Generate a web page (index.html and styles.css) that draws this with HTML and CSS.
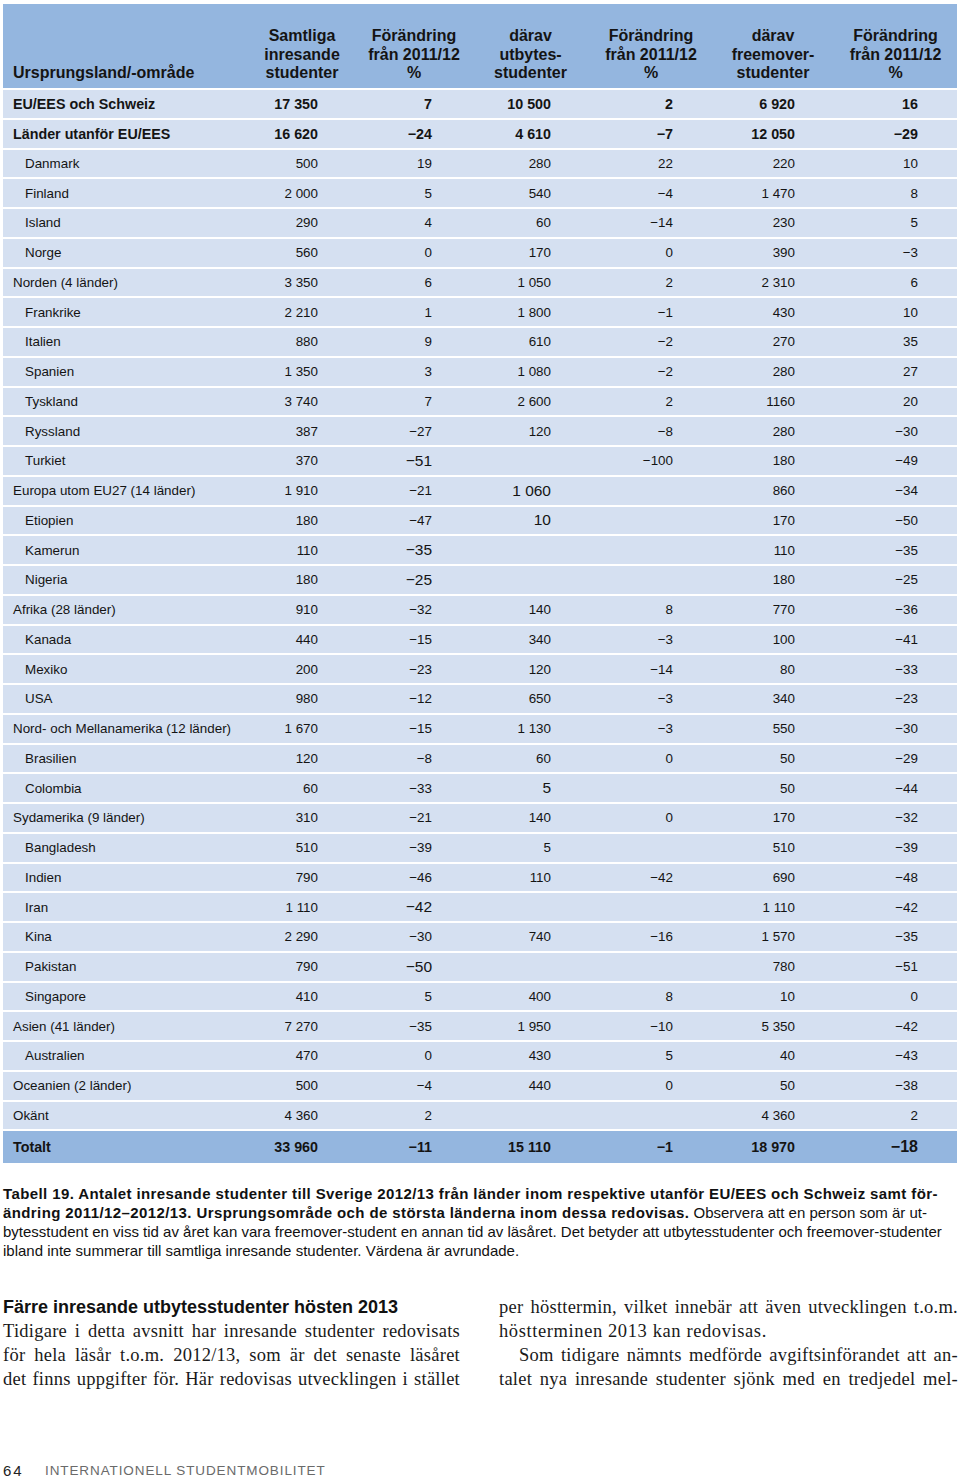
FILE: index.html
```html
<!DOCTYPE html>
<html lang="sv">
<head>
<meta charset="utf-8">
<title>Tabell 19</title>
<link rel="stylesheet" href="styles.css">
</head>
<body>
<div class="page">
  <div class="table">
    <div class="row head">
      <div class="hl">Ursprungsland/-område</div>
      <div class="hc">Samtliga<br>inresande<br>studenter</div>
      <div class="hc">Förändring<br>från 2011/12<br>%</div>
      <div class="hc">därav<br>utbytes-<br>studenter</div>
      <div class="hc">Förändring<br>från 2011/12<br>%</div>
      <div class="hc">därav<br>freemover-<br>studenter</div>
      <div class="hc">Förändring<br>från 2011/12<br>%</div>
    </div>
    <div class="row bold"><div class="l">EU/EES och Schweiz</div><div class="n">17 350</div><div class="n">7</div><div class="n">10 500</div><div class="n">2</div><div class="n">6 920</div><div class="n">16</div></div>
    <div class="row bold"><div class="l">Länder utanför EU/EES</div><div class="n">16 620</div><div class="n">−24</div><div class="n">4 610</div><div class="n">−7</div><div class="n">12 050</div><div class="n">−29</div></div>
    <div class="row"><div class="l in">Danmark</div><div class="n">500</div><div class="n">19</div><div class="n">280</div><div class="n">22</div><div class="n">220</div><div class="n">10</div></div>
    <div class="row"><div class="l in">Finland</div><div class="n">2 000</div><div class="n">5</div><div class="n">540</div><div class="n">−4</div><div class="n">1 470</div><div class="n">8</div></div>
    <div class="row"><div class="l in">Island</div><div class="n">290</div><div class="n">4</div><div class="n">60</div><div class="n">−14</div><div class="n">230</div><div class="n">5</div></div>
    <div class="row"><div class="l in">Norge</div><div class="n">560</div><div class="n">0</div><div class="n">170</div><div class="n">0</div><div class="n">390</div><div class="n">−3</div></div>
    <div class="row"><div class="l">Norden (4 länder)</div><div class="n">3 350</div><div class="n">6</div><div class="n">1 050</div><div class="n">2</div><div class="n">2 310</div><div class="n">6</div></div>
    <div class="row"><div class="l in">Frankrike</div><div class="n">2 210</div><div class="n">1</div><div class="n">1 800</div><div class="n">−1</div><div class="n">430</div><div class="n">10</div></div>
    <div class="row"><div class="l in">Italien</div><div class="n">880</div><div class="n">9</div><div class="n">610</div><div class="n">−2</div><div class="n">270</div><div class="n">35</div></div>
    <div class="row"><div class="l in">Spanien</div><div class="n">1 350</div><div class="n">3</div><div class="n">1 080</div><div class="n">−2</div><div class="n">280</div><div class="n">27</div></div>
    <div class="row"><div class="l in">Tyskland</div><div class="n">3 740</div><div class="n">7</div><div class="n">2 600</div><div class="n">2</div><div class="n">1160</div><div class="n">20</div></div>
    <div class="row"><div class="l in">Ryssland</div><div class="n">387</div><div class="n">−27</div><div class="n">120</div><div class="n">−8</div><div class="n">280</div><div class="n">−30</div></div>
    <div class="row"><div class="l in">Turkiet</div><div class="n">370</div><div class="n lg">−51</div><div class="n"></div><div class="n">−100</div><div class="n">180</div><div class="n">−49</div></div>
    <div class="row"><div class="l">Europa utom EU27 (14 länder)</div><div class="n">1 910</div><div class="n">−21</div><div class="n lg">1 060</div><div class="n"></div><div class="n">860</div><div class="n">−34</div></div>
    <div class="row"><div class="l in">Etiopien</div><div class="n">180</div><div class="n">−47</div><div class="n lg">10</div><div class="n"></div><div class="n">170</div><div class="n">−50</div></div>
    <div class="row"><div class="l in">Kamerun</div><div class="n">110</div><div class="n lg">−35</div><div class="n"></div><div class="n"></div><div class="n">110</div><div class="n">−35</div></div>
    <div class="row"><div class="l in">Nigeria</div><div class="n">180</div><div class="n lg">−25</div><div class="n"></div><div class="n"></div><div class="n">180</div><div class="n">−25</div></div>
    <div class="row"><div class="l">Afrika (28 länder)</div><div class="n">910</div><div class="n">−32</div><div class="n">140</div><div class="n">8</div><div class="n">770</div><div class="n">−36</div></div>
    <div class="row"><div class="l in">Kanada</div><div class="n">440</div><div class="n">−15</div><div class="n">340</div><div class="n">−3</div><div class="n">100</div><div class="n">−41</div></div>
    <div class="row"><div class="l in">Mexiko</div><div class="n">200</div><div class="n">−23</div><div class="n">120</div><div class="n">−14</div><div class="n">80</div><div class="n">−33</div></div>
    <div class="row"><div class="l in">USA</div><div class="n">980</div><div class="n">−12</div><div class="n">650</div><div class="n">−3</div><div class="n">340</div><div class="n">−23</div></div>
    <div class="row"><div class="l">Nord- och Mellanamerika (12 länder)</div><div class="n">1 670</div><div class="n">−15</div><div class="n">1 130</div><div class="n">−3</div><div class="n">550</div><div class="n">−30</div></div>
    <div class="row"><div class="l in">Brasilien</div><div class="n">120</div><div class="n">−8</div><div class="n">60</div><div class="n">0</div><div class="n">50</div><div class="n">−29</div></div>
    <div class="row"><div class="l in">Colombia</div><div class="n">60</div><div class="n">−33</div><div class="n lg">5</div><div class="n"></div><div class="n">50</div><div class="n">−44</div></div>
    <div class="row"><div class="l">Sydamerika (9 länder)</div><div class="n">310</div><div class="n">−21</div><div class="n">140</div><div class="n">0</div><div class="n">170</div><div class="n">−32</div></div>
    <div class="row"><div class="l in">Bangladesh</div><div class="n">510</div><div class="n">−39</div><div class="n">5</div><div class="n"></div><div class="n">510</div><div class="n">−39</div></div>
    <div class="row"><div class="l in">Indien</div><div class="n">790</div><div class="n">−46</div><div class="n">110</div><div class="n">−42</div><div class="n">690</div><div class="n">−48</div></div>
    <div class="row"><div class="l in">Iran</div><div class="n">1 110</div><div class="n lg">−42</div><div class="n"></div><div class="n"></div><div class="n">1 110</div><div class="n">−42</div></div>
    <div class="row"><div class="l in">Kina</div><div class="n">2 290</div><div class="n">−30</div><div class="n">740</div><div class="n">−16</div><div class="n">1 570</div><div class="n">−35</div></div>
    <div class="row"><div class="l in">Pakistan</div><div class="n">790</div><div class="n lg">−50</div><div class="n"></div><div class="n"></div><div class="n">780</div><div class="n">−51</div></div>
    <div class="row"><div class="l in">Singapore</div><div class="n">410</div><div class="n">5</div><div class="n">400</div><div class="n">8</div><div class="n">10</div><div class="n">0</div></div>
    <div class="row"><div class="l">Asien (41 länder)</div><div class="n">7 270</div><div class="n">−35</div><div class="n">1 950</div><div class="n">−10</div><div class="n">5 350</div><div class="n">−42</div></div>
    <div class="row"><div class="l in">Australien</div><div class="n">470</div><div class="n">0</div><div class="n">430</div><div class="n">5</div><div class="n">40</div><div class="n">−43</div></div>
    <div class="row"><div class="l">Oceanien (2 länder)</div><div class="n">500</div><div class="n">−4</div><div class="n">440</div><div class="n">0</div><div class="n">50</div><div class="n">−38</div></div>
    <div class="row"><div class="l">Okänt</div><div class="n">4 360</div><div class="n">2</div><div class="n"></div><div class="n"></div><div class="n">4 360</div><div class="n">2</div></div>
    <div class="row bold total"><div class="l">Totalt</div><div class="n">33 960</div><div class="n">−11</div><div class="n">15 110</div><div class="n">−1</div><div class="n">18 970</div><div class="n lg">−18</div></div>
  </div>

  <div class="caption">
    <div class="cl"><b>Tabell 19. Antalet inresande studenter till Sverige 2012/13 från länder inom respektive utanför EU/EES och Schweiz samt för-</b></div>
    <div class="cl"><b>ändring 2011/12–2012/13. Ursprungsområde och de största länderna inom dessa redovisas.</b> Observera att en person som är ut-</div>
    <div class="cl">bytesstudent en viss tid av året kan vara freemover-student en annan tid av läsåret. Det betyder att utbytesstudenter och freemover-studenter</div>
    <div class="cl">ibland inte summerar till samtliga inresande studenter. Värdena är avrundade.</div>
  </div>

  <div class="article">
    <div class="col">
      <h2 class="heading">Färre inresande utbytesstudenter hösten 2013</h2>
      <div class="jl">Tidigare i detta avsnitt har inresande studenter redovisats</div>
      <div class="jl">för hela läsår t.o.m. 2012/13, som är det senaste läsåret</div>
      <div class="jl">det finns uppgifter för. Här redovisas utvecklingen i stället</div>
    </div>
    <div class="col">
      <div class="jl">per hösttermin, vilket innebär att även utvecklingen t.o.m.</div>
      <div class="ll">höstterminen 2013 kan redovisas.</div>
      <div class="jl indent">Som tidigare nämnts medförde avgiftsinförandet att an-</div>
      <div class="jl">talet nya inresande studenter sjönk med en tredjedel mel-</div>
    </div>
  </div>

  <div class="footer">
    <span class="pnum">64</span>
    <span class="ptitle">INTERNATIONELL STUDENTMOBILITET</span>
  </div>
</div>
</body>
</html>
```

FILE: styles.css
```css
html, body {
  margin: 0;
  padding: 0;
  background: #ffffff;
}

.page {
  width: 960px;
  height: 1477px;
  padding: 4px 3px 0 3px;
  box-sizing: border-box;
  font-family: "Liberation Sans", Arial, sans-serif;
  color: #141414;
  display: flex;
  flex-direction: column;
}

.table {
  width: 954px;
  display: flex;
  flex-direction: column;
  gap: 2px;
}

.row {
  display: grid;
  grid-template-columns: 244px 110px 114px 119px 122px 122px 123px;
  height: 27.75px;
  align-items: center;
  background: #d5e0f1;
  font-size: 13.4px;
}

.row.head {
  height: 84px;
  background: #94b6df;
  align-items: end;
  font-size: 16px;
  font-weight: bold;
  line-height: 18.6px;
}

.hl {
  padding: 0 0 5px 10px;
  white-space: nowrap;
}

.hc {
  text-align: center;
  padding-bottom: 5px;
  white-space: nowrap;
}

.l {
  padding-left: 10px;
  white-space: nowrap;
}

.l.in {
  padding-left: 22px;
}

.n {
  text-align: right;
  padding-right: 39px;
  white-space: nowrap;
}

.n.lg {
  font-size: 15.5px;
}

.row.bold {
  font-weight: bold;
  font-size: 14.3px;
}

.row.bold .n.lg {
  font-size: 16px;
}

.row.total {
  height: 32px;
  background: #94b6df;
}

.caption {
  margin-top: 21px;
  font-size: 15px;
  line-height: 19px;
  color: #111;
}

.caption b {
  letter-spacing: 0.4px;
}

.cl {
  white-space: nowrap;
}

.article {
  margin-top: 35px;
  display: grid;
  grid-template-columns: 457px 459px;
  column-gap: 39px;
}

.col {
  min-width: 0;
}

.heading {
  margin: 0;
  font-family: "Liberation Sans", Arial, sans-serif;
  font-size: 18px;
  font-weight: bold;
  line-height: 24px;
  color: #111;
}

.jl, .ll {
  font-family: "Liberation Serif", "Times New Roman", serif;
  font-size: 18.5px;
  letter-spacing: 0.25px;
  line-height: 24px;
  color: #1a1a1a;
}

.jl {
  text-align: justify;
  text-align-last: justify;
}

.ll {
  letter-spacing: 0.6px;
}

.indent {
  text-indent: 20px;
}

.footer {
  margin-top: auto;
  height: 16px;
  margin-bottom: -2px;
  display: flex;
  align-items: center;
  font-size: 13.5px;
  line-height: 16px;
}

.pnum {
  width: 42px;
  color: #222;
  font-size: 15px;
  letter-spacing: 2px;
}

.ptitle {
  color: #6a6a6a;
  letter-spacing: 0.9px;
}
```
